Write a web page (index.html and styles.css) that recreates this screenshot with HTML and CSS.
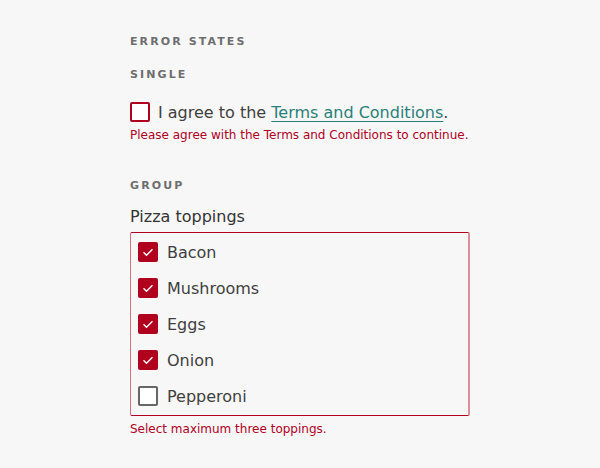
FILE: index.html
```html
<!DOCTYPE html>
<html lang="en">
<head>
<meta charset="utf-8">
<title>Error states</title>
<link rel="stylesheet" href="styles.css">
</head>
<body>
<main class="page">
  <h2 class="heading heading-top">Error states</h2>
  <h3 class="heading">Single</h3>
  <label class="check check-single">
    <span class="box box-error"></span>
    <span class="check-text">I agree to the <a class="link" href="#">Terms and Conditions</a>.</span>
  </label>
  <p class="error-msg error-single">Please agree with the Terms and Conditions to continue.</p>

  <h3 class="heading heading-group">Group</h3>
  <div class="group" role="group" aria-labelledby="toppings-label">
    <p class="legend" id="toppings-label">Pizza toppings</p>
    <div class="group-box">
      <label class="check"><span class="box box-checked"><svg viewBox="0 0 20 20" class="tick"><path d="M5.5 10.3l3 3 6-6"/></svg></span><span class="check-text">Bacon</span></label>
      <label class="check"><span class="box box-checked"><svg viewBox="0 0 20 20" class="tick"><path d="M5.5 10.3l3 3 6-6"/></svg></span><span class="check-text">Mushrooms</span></label>
      <label class="check"><span class="box box-checked"><svg viewBox="0 0 20 20" class="tick"><path d="M5.5 10.3l3 3 6-6"/></svg></span><span class="check-text">Eggs</span></label>
      <label class="check"><span class="box box-checked"><svg viewBox="0 0 20 20" class="tick"><path d="M5.5 10.3l3 3 6-6"/></svg></span><span class="check-text">Onion</span></label>
      <label class="check"><span class="box box-empty"></span><span class="check-text">Pepperoni</span></label>
    </div>
  </div>
  <p class="error-msg error-group">Select maximum three toppings.</p>
</main>
</body>
</html>
```

FILE: styles.css
```css
* { box-sizing: border-box; }
html, body { margin: 0; padding: 0; }
body {
  background: #f7f7f7;
  font-family: "DejaVu Sans", "Open Sans", sans-serif;
  color: #333333;
  width: 600px;
  height: 468px;
  overflow: hidden;
}
.page {
  padding: 34px 0 0 130px;
}
.heading {
  margin: 0;
  font-size: 11px;
  line-height: 16px;
  font-weight: bold;
  letter-spacing: 2.1px;
  text-transform: uppercase;
  color: #6e6e6e;
}
.heading-top { margin-bottom: 17px; }
.heading-group { margin-top: 35px; }
.check {
  display: flex;
  align-items: center;
  height: 36px;
  font-size: 16px;
  color: #404040;
}
.check-single { margin-top: 17px; height: 24px; }
.box {
  width: 20px;
  height: 20px;
  border-radius: 2px;
  flex: none;
  margin-right: 9px;
  display: flex;
}
.box-error { border: 2px solid #b0001e; background: #ffffff; }
.box-empty { border: 2px solid #666666; background: #ffffff; }
.box-checked { background: #b0001e; }
.tick { width: 20px; height: 20px; fill: none; stroke: #ffffff; stroke-width: 1.4; }
.check-single .box { margin-right: 8px; }
.link { color: #2a7f77; text-decoration: underline; text-underline-offset: 3px; }
.error-msg {
  margin: 0;
  font-size: 12px;
  line-height: 16px;
  color: #b0001e;
}
.error-single { margin-top: 3px; }
.group { margin: 0; padding: 0; }
.legend {
  margin: 12px 0 0;
  font-size: 16px;
  line-height: 22px;
  color: #333333;
}
.group-box {
  margin-top: 4px;
  width: 340px;
  border-top: 1px solid #b0001e;
  border-bottom: 1px solid #b0001e;
  border-left: 1px solid #d4737f;
  border-right: 2px solid #dc8f99;
  border-radius: 2px;
  padding: 1px 0 1px 7px;
}
.error-group { margin-top: 5px; }
```
